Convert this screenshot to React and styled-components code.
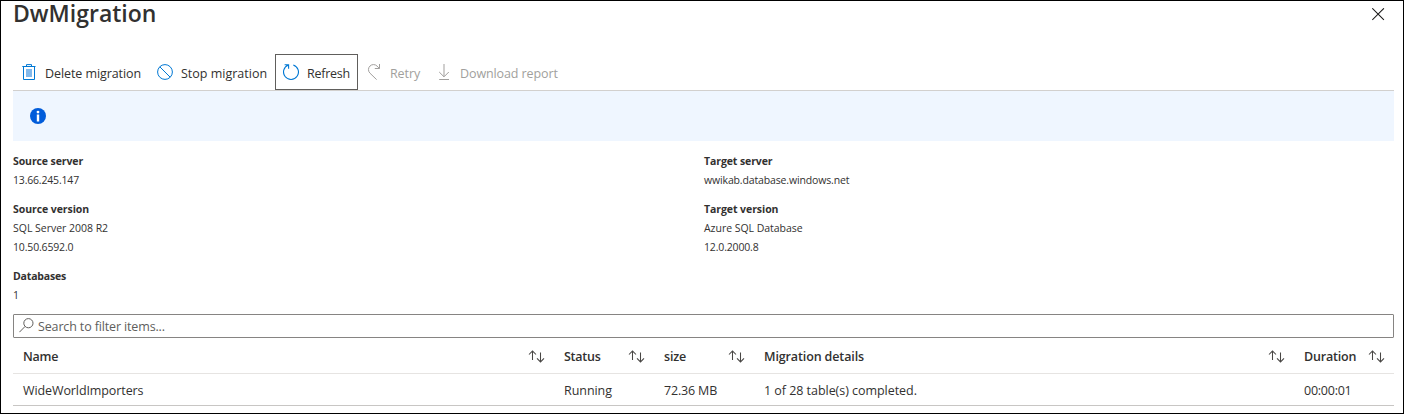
import React from 'react';
import styled, { createGlobalStyle } from 'styled-components';

const Global = createGlobalStyle`
  *, *::before, *::after { box-sizing: border-box; }
  body {
    margin: 0;
    background: #fff;
    color: #323130;
    font-family: "Open Sans", "Noto Sans", sans-serif;
    font-size: 12.5px;
  }
`;

const Blade = styled.main`
  height: 414px;
  border: 1px solid #000;
  padding: 0 9px 0 12px;
  display: flex;
  flex-direction: column;
`;

const Label = styled.span`
  letter-spacing: ${(p) => p.$track || 0}px;
  white-space: nowrap;
`;

const Header = styled.header`
  height: 53px;
  flex: none;
  display: flex;
  justify-content: space-between;
  align-items: flex-start;
`;

const Title = styled.h1`
  margin: 0;
  font-size: 23px;
  font-weight: 600;
  line-height: 25px;
`;

const CloseButton = styled.button`
  border: 0;
  background: none;
  padding: 7px 9px 0 0;
  color: #1b1a19;
  line-height: 0;
`;

const Toolbar = styled.div`
  height: 37px;
  flex: none;
  display: flex;
  border-bottom: 1px solid #d2d0ce;
`;

const ToolButton = styled.button`
  width: ${(p) => p.$width}px;
  height: 36px;
  padding: 0 0 0 ${(p) => (p.$focused ? 7 : 8)}px;
  display: flex;
  align-items: center;
  gap: 8px;
  border: ${(p) => (p.$focused ? '1px solid #605e5c' : '0')};
  background: none;
  font: inherit;
  color: ${(p) => (p.disabled ? '#a19f9d' : '#323130')};

  svg { flex: none; color: ${(p) => (p.disabled ? '#a19f9d' : '#0078d4')}; }
  ${Label} { line-height: 18px; padding-top: 4px; }
`;

const InfoBar = styled.div`
  height: 50px;
  flex: none;
  padding: 0 17px;
  display: flex;
  align-items: center;
  background: #eff6ff;
`;

const Essentials = styled.section`
  height: 173px;
  flex: none;
  padding-top: 11px;
  display: grid;
  grid-template-columns: 691px 1fr;
  font-size: 10.5px;
  line-height: 19px;
`;

const Column = styled.dl`
  margin: 0;
  display: flex;
  flex-direction: column;
  gap: 10px;
`;

const Field = styled.div`
  display: flex;
  flex-direction: column;
`;

const Term = styled.dt`
  font-weight: 700;
  letter-spacing: ${(p) => p.$track}px;
`;

const Value = styled.dd`
  margin: 0;
  letter-spacing: ${(p) => p.$track}px;
`;

const SearchBox = styled.div`
  height: 24px;
  flex: none;
  padding-left: 5px;
  display: flex;
  align-items: center;
  gap: 4px;
  border: 1px solid #868482;
  border-radius: 1px;
  color: #605e5c;

  svg { margin-top: -2px; }
  ${Label} { padding-top: 1px; }
`;

const Row = styled.div`
  height: ${(p) => (p.$head ? 36 : 32)}px;
  flex: none;
  display: grid;
  grid-template-columns: 541px 100px 100px 540px 1fr;
  border-bottom: 1px solid ${(p) => (p.$head ? '#e6e4e2' : '#c8c6c4')};
  font-weight: ${(p) => (p.$head ? 600 : 400)};
`;

const Cell = styled.div`
  padding: 2px 9px 0 10px;
  display: flex;
  align-items: center;
  justify-content: space-between;
`;

const TrashIcon = () => (
  <svg width="16" height="16" viewBox="0 0 16 16" fill="none" stroke="currentColor">
    <rect x="5" y="5" width="6" height="8" fill="#83b9eb" stroke="none" />
    <path d="M1.3 2.5h13.2M5.5 2.3V.6h5v1.7M2.5 2.7v12.8h11V2.7" />
  </svg>
);

const StopIcon = () => (
  <svg width="16" height="16" viewBox="0 0 16 16" fill="none" stroke="currentColor">
    <circle cx="8" cy="8" r="7.4" />
    <path d="M2.8 2.8l10.4 10.4" />
  </svg>
);

const RefreshIcon = () => (
  <svg width="16" height="16" viewBox="0 0 16 16" fill="none" stroke="currentColor" strokeWidth="1.1">
    <path d="M10.3.9A7.45 7.45 0 1 1 5.4 1M1.6.7h4v4" />
  </svg>
);

const RetryIcon = () => (
  <svg width="16" height="16" viewBox="0 0 16 16" fill="none" stroke="currentColor">
    <path d="M10.6 15.6L3.9 9.1A4.9 4.9 0 0 1 11.1 2.1L13.3 4.4M13.5 0v4.5H8.8" />
  </svg>
);

const DownloadIcon = () => (
  <svg width="16" height="16" viewBox="0 0 16 16" fill="none" stroke="currentColor">
    <path d="M8 0v12.6M3.2 8L8 12.8 12.8 8M3.2 15.5h9.8" />
  </svg>
);

const CloseIcon = () => (
  <svg width="13" height="13" viewBox="0 0 13 13" fill="none" stroke="currentColor" strokeWidth="1.05">
    <path d="M.3.3l11.6 11.6M11.9.3L.3 11.9" />
  </svg>
);

const InfoIcon = () => (
  <svg width="16" height="16" viewBox="0 0 16 16">
    <circle cx="8" cy="8" r="8" fill="#015cda" />
    <circle cx="8" cy="4.1" r="1.4" fill="#fff" />
    <rect x="6.8" y="6.5" width="2.4" height="7" fill="#fff" />
  </svg>
);

const SearchIcon = () => (
  <svg width="15" height="15" viewBox="0 0 15 15" fill="none" stroke="currentColor">
    <circle cx="9.4" cy="5.2" r="4.6" />
    <path d="M6.1 8.4L.4 14.2" />
  </svg>
);

const SortIcon = () => (
  <svg width="17" height="13" viewBox="0 0 17 13" fill="none" stroke="#484644" strokeWidth="1.05">
    <path d="M4.5 10V.9M1 4.5L4.5 1 8 4.5M12.5 2.5v9.3M9 8.4l3.5 3.5L16 8.4" />
  </svg>
);

const TOOLS = [
  { text: 'Delete migration', Icon: TrashIcon, width: 136, track: -0.08 },
  { text: 'Stop migration', Icon: StopIcon, width: 126, track: 0 },
  { text: 'Refresh', Icon: RefreshIcon, width: 83, track: -0.24, focused: true },
  { text: 'Retry', Icon: RetryIcon, width: 70, track: -0.1, disabled: true },
  { text: 'Download report', Icon: DownloadIcon, width: 138, track: -0.1, disabled: true },
];

const COLUMNS = [
  [
    { term: ['Source server', -0.1], values: [['13.66.245.147', -0.18]] },
    { term: ['Source version', -0.07], values: [['SQL Server 2008 R2', -0.02], ['10.50.6592.0', -0.16]] },
    { term: ['Databases', -0.18], values: [['1', 0]] },
  ],
  [
    { term: ['Target server', -0.1], values: [['wwikab.database.windows.net', -0.14]] },
    { term: ['Target version', -0.07], values: [['Azure SQL Database', -0.04], ['12.0.2000.8', -0.16]] },
  ],
];

const HEADINGS = [['Name', -0.25], ['Status', -0.25], ['size', -0.2], ['Migration details', -0.12], ['Duration', -0.2]];

const CELLS = [
  ['WideWorldImporters', -0.1],
  ['Running', -0.05],
  ['72.36 MB', -0.17],
  ['1 of 28 table(s) completed.', -0.04],
  ['00:00:01', -0.24],
];

export default function App() {
  return (
    <>
      <Global />
      <Blade>
        <Header>
          <Title>DwMigration</Title>
          <CloseButton aria-label="Close"><CloseIcon /></CloseButton>
        </Header>
        <Toolbar>
          {TOOLS.map(({ text, Icon, width, track, focused, disabled }) => (
            <ToolButton key={text} $width={width} $focused={focused} disabled={disabled}>
              <Icon />
              <Label $track={track}>{text}</Label>
            </ToolButton>
          ))}
        </Toolbar>
        <InfoBar><InfoIcon /></InfoBar>
        <Essentials>
          {COLUMNS.map((fields, i) => (
            <Column key={i}>
              {fields.map(({ term, values }) => (
                <Field key={term[0]}>
                  <Term $track={term[1]}>{term[0]}</Term>
                  {values.map(([text, track]) => <Value key={text} $track={track}>{text}</Value>)}
                </Field>
              ))}
            </Column>
          ))}
        </Essentials>
        <SearchBox>
          <SearchIcon />
          <Label $track={-0.14}>Search to filter items...</Label>
        </SearchBox>
        <Row $head>
          {HEADINGS.map(([text, track]) => (
            <Cell key={text}>
              <Label $track={track}>{text}</Label>
              <SortIcon />
            </Cell>
          ))}
        </Row>
        <Row>
          {CELLS.map(([text, track]) => (
            <Cell key={text}><Label $track={track}>{text}</Label></Cell>
          ))}
        </Row>
      </Blade>
    </>
  );
}
